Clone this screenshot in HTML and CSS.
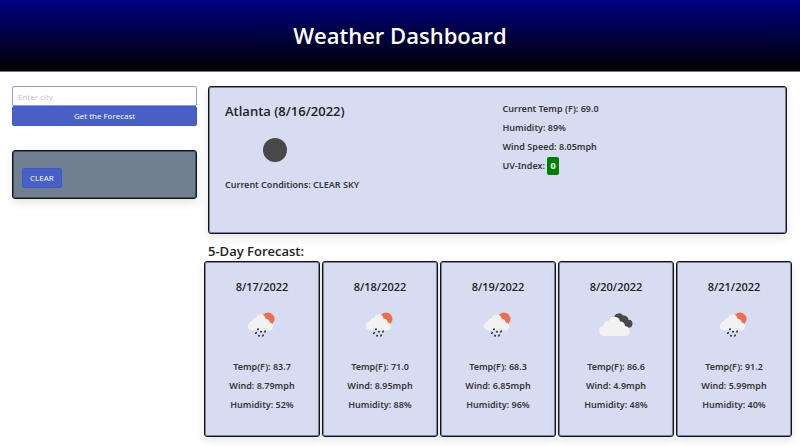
FILE: index.html
```html
<!DOCTYPE html>
<html lang="en">
<head>
<meta charset="utf-8">
<title>Weather Dashboard</title>
<link rel="stylesheet" href="styles.css">
</head>
<body>
<svg class="sprites" aria-hidden="true">
  <symbol id="rain" viewBox="0 0 50 50">
    <circle cx="31" cy="20" r="6.500" fill="#ec6e4c"/>
    <path d="M15.500 31.500a4.500 4.500 0 0 1-.5-9 4.500 4.500 0 0 1 4.200-3.800 4.800 4.800 0 0 1 9.300 1 4 4 0 0 1 4.300 3.800 4 4 0 0 1 3.200 4 4 4 0 0 1-4 4z" fill="#f2f2f2"/>
    <path d="M21.500 29.500l-1 1.500M19.500 33l-1 2M24.500 32l-1 1.500M22.500 36l-1 1.500M28.500 31.500l-1 2M26.500 35.500l-1 2" stroke="#222" stroke-width="1.500" fill="none"/>
  </symbol>
  <symbol id="clouds" viewBox="0 0 50 50">
    <path d="M23 20a5 5 0 0 1 9-3.500 4.700 4.700 0 0 1 5.500 4.300 4 4 0 0 1 4 4 4 4 0 0 1-4 4H31z" fill="#484848"/>
    <path d="M13 37a5.200 5.200 0 0 1-.5-10.300 5.700 5.700 0 0 1 5.500-5 5.700 5.700 0 0 1 11 .8 4.500 4.500 0 0 1 5 4.500 5 5 0 0 1-.5 10z" fill="#f2f2f2"/>
  </symbol>
</svg>
<header class="banner"><h1>Weather Dashboard</h1></header>
<div class="layout">
  <aside class="side">
    <form class="search">
      <input type="text" class="city" placeholder="Enter city" aria-label="City">
      <button type="button" class="btn wide">Get the Forecast</button>
    </form>
    <section class="history box"><button type="button" class="btn">CLEAR</button></section>
  </aside>
  <main class="main">
    <section class="current box">
      <div>
        <h2>Atlanta (8/16/2022)</h2>
        <svg class="sky" viewBox="0 0 100 50"><circle cx="50" cy="25" r="12" fill="#484848"/></svg>
        <p>Current Conditions: CLEAR SKY</p>
      </div>
      <div class="stats">
        <p>Current Temp (F): 69.0</p>
        <p>Humidity: 89%</p>
        <p>Wind Speed: 8.05mph</p>
        <p>UV-Index: <span class="uv">0</span></p>
      </div>
    </section>
    <h2 class="heading">5-Day Forecast:</h2>
    <section class="days">
      <article class="day box"><h3>8/17/2022</h3><svg class="icon"><use href="#rain"/></svg><p>Temp(F): 83.7</p><p>Wind: 8.79mph</p><p>Humidity: 52%</p></article>
      <article class="day box"><h3>8/18/2022</h3><svg class="icon"><use href="#rain"/></svg><p>Temp(F): 71.0</p><p>Wind: 8.95mph</p><p>Humidity: 88%</p></article>
      <article class="day box"><h3>8/19/2022</h3><svg class="icon"><use href="#rain"/></svg><p>Temp(F): 68.3</p><p>Wind: 6.85mph</p><p>Humidity: 96%</p></article>
      <article class="day box"><h3>8/20/2022</h3><svg class="icon"><use href="#clouds"/></svg><p>Temp(F): 86.6</p><p>Wind: 4.9mph</p><p>Humidity: 48%</p></article>
      <article class="day box"><h3>8/21/2022</h3><svg class="icon"><use href="#rain"/></svg><p>Temp(F): 91.2</p><p>Wind: 5.99mph</p><p>Humidity: 40%</p></article>
    </section>
  </main>
</div>
</body>
</html>
```
FILE: styles.css
```css
* { box-sizing: border-box; }
body { margin: 0; background: #fff; color: #363636; font: 600 9px/19px "Noto Sans", "Open Sans", sans-serif; }
h1, h2, h3, p { margin: 0; font-weight: inherit; }
.sprites { display: none; }
.banner { padding: 18px 0; text-align: center; color: #fff; background: linear-gradient(#000080, #000); border-bottom: 1px solid #777; }
h1 { font-family: "Open Sans", sans-serif; font-size: 22px; line-height: 35px; }
.layout { display: grid; grid-template-columns: 185px 1fr; gap: 11px; padding: 14px 13px 9px 12px; }
.box { border: 1px solid #14151c; border-radius: 3px; box-shadow: inset 0 0 0 1px rgba(20, 21, 28, .45), 0 4px 10px rgba(10, 10, 10, .1); background: #d8dcf3; }
.search { display: flex; flex-direction: column; }
.city { height: 20px; padding: 0 5px; border: 1px solid #8f9ee0; border-radius: 2px 2px 0 0; font: 400 8px "Open Sans", sans-serif; }
.city::placeholder { color: #c4c4c8; }
.btn { height: 20px; padding: 0 7px; border: 1px solid #4059c8; border-radius: 2px; background: #485fc7; color: #fff; font: 400 8px/18px "Open Sans", sans-serif; }
.history { margin-top: 24px; padding: 17px 9px 10px; background: #708090; }
.current { display: grid; grid-template-columns: 1fr 1fr; column-gap: 10px; min-height: 148px; padding: 12px 16px; }
h2 { font-family: "Open Sans", sans-serif; font-size: 13px; line-height: 24px; color: #222; }
.sky { display: block; width: 100px; height: 50px; margin: 2px 0 0; }
.uv { display: inline-block; padding: 0 3px; border-radius: 2px; background: #008000; color: #fff; font-weight: 700; line-height: 18px; }
.heading { margin-top: 7px; line-height: 20px; }
.days { display: grid; grid-template-columns: repeat(5, 1fr); gap: 2px; margin: 0 -5px 0 -4px; }
.day { min-height: 176px; padding: 12px 4px 20px; text-align: center; }
h3 { font-family: "Open Sans", sans-serif; font-size: 11px; line-height: 25px; color: #222; }
.icon { display: block; width: 50px; height: 50px; margin: 0 auto 8px; }
```
